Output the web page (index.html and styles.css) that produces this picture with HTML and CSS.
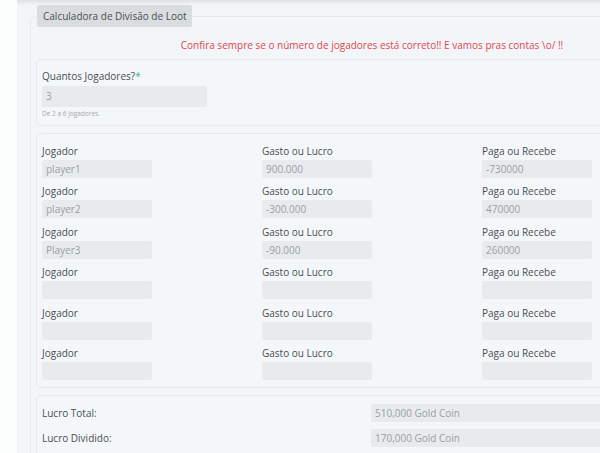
FILE: index.html
```html
<!DOCTYPE html>
<html lang="pt">
<head>
<meta charset="utf-8">
<title>Calculadora de Divisão de Loot</title>
<link rel="stylesheet" href="styles.css">
</head>
<body>
<div class="page">
  <div class="panel">
    <fieldset class="calc">
      <legend class="calc-legend">Calculadora de Divisão de Loot</legend>
      <p class="warning">Confira sempre se o número de jogadores está correto!! E vamos pras contas \o/ !!</p>

      <div class="box box-count">
        <label class="label">Quantos Jogadores?<span class="req">*</span></label>
        <div class="input input-count">3</div>
        <div class="help">De 2 a 6 jogadores.</div>
      </div>

      <div class="box box-players">
        <div class="row">
          <div class="cell"><label class="label">Jogador</label><div class="input">player1</div></div>
          <div class="cell"><label class="label">Gasto ou Lucro</label><div class="input">900.000</div></div>
          <div class="cell"><label class="label">Paga ou Recebe</label><div class="input">-730000</div></div>
        </div>
        <div class="row">
          <div class="cell"><label class="label">Jogador</label><div class="input">player2</div></div>
          <div class="cell"><label class="label">Gasto ou Lucro</label><div class="input">-300.000</div></div>
          <div class="cell"><label class="label">Paga ou Recebe</label><div class="input">470000</div></div>
        </div>
        <div class="row">
          <div class="cell"><label class="label">Jogador</label><div class="input">Player3</div></div>
          <div class="cell"><label class="label">Gasto ou Lucro</label><div class="input">-90.000</div></div>
          <div class="cell"><label class="label">Paga ou Recebe</label><div class="input">260000</div></div>
        </div>
        <div class="row">
          <div class="cell"><label class="label">Jogador</label><div class="input"></div></div>
          <div class="cell"><label class="label">Gasto ou Lucro</label><div class="input"></div></div>
          <div class="cell"><label class="label">Paga ou Recebe</label><div class="input"></div></div>
        </div>
        <div class="row">
          <div class="cell"><label class="label">Jogador</label><div class="input"></div></div>
          <div class="cell"><label class="label">Gasto ou Lucro</label><div class="input"></div></div>
          <div class="cell"><label class="label">Paga ou Recebe</label><div class="input"></div></div>
        </div>
        <div class="row">
          <div class="cell"><label class="label">Jogador</label><div class="input"></div></div>
          <div class="cell"><label class="label">Gasto ou Lucro</label><div class="input"></div></div>
          <div class="cell"><label class="label">Paga ou Recebe</label><div class="input"></div></div>
        </div>
      </div>

      <div class="box box-total">
        <div class="total-row">
          <span class="label">Lucro Total:</span>
          <div class="input input-wide">510,000 Gold Coin</div>
        </div>
        <div class="total-row">
          <span class="label">Lucro Dividido:</span>
          <div class="input input-wide">170,000 Gold Coin</div>
        </div>
      </div>
    </fieldset>
  </div>
</div>
</body>
</html>
```
FILE: styles.css
```css
html, body {
  margin: 0;
  padding: 0;
  overflow: hidden;
  background: #fcfdfd;
}
body {
  font-family: "Open Sans", "Noto Sans", sans-serif;
  color: #4a4e53;
}
.page {
  padding-left: 17px;
  width: 760px;
}
.panel {
  background: #f3f6f8;
  min-height: 453px;
  box-shadow: inset 0 5px 4px -3px rgba(0, 0, 0, 0.10);
  padding: 5px 0 0 13px;
}
.calc {
  margin: 0;
  width: 672px;
  padding: 0 5px 6px 5px;
  border: 1px solid #e5e9ec;
  border-radius: 6px;
  box-sizing: content-box;
}
.calc-legend {
  background: #d9dde0;
  color: #4a4e52;
  font-size: 10px;
  line-height: 22px;
  height: 22px;
  padding: 0 6px;
  margin-left: 1px;
  border-radius: 2px;
}
.warning {
  margin: 10px 0 6px 0;
  text-align: center;
  color: #e3444c;
  font-size: 10px;
  line-height: 16px;
}
.box {
  border: 1px solid #e6eaed;
  border-radius: 5px;
  background: #f4f7f9;
  padding: 0 5px 0 5px;
  margin-bottom: 7px;
}
.label {
  display: block;
  font-size: 10px;
  line-height: 14px;
  color: #4a4e53;
}
.req {
  color: #3cb878;
}
.input {
  background: #e8ebee;
  border-radius: 2px;
  color: #9a9ea3;
  font-size: 10px;
  line-height: 18px;
  height: 18px;
  padding: 0 4px;
  width: 102px;
  box-sizing: content-box;
}
.box-count {
  padding-top: 9px;
  padding-bottom: 6px;
}
.box-count .label {
  margin-bottom: 3px;
}
.input-count {
  width: 157px;
  height: 21px;
  line-height: 21px;
}
.help {
  font-size: 6.5px;
  color: #a4a8ac;
  margin-top: 2px;
  line-height: 10px;
}
.box-players {
  padding-top: 10px;
  padding-bottom: 7px;
}
.row {
  display: grid;
  grid-template-columns: 220px 220px 220px;
  margin-bottom: 6.4px;
}
.row:last-child {
  margin-bottom: 0;
}
.cell .label {
  margin-bottom: 2px;
}
.box-total {
  padding-top: 8px;
  padding-bottom: 6px;
}
.total-row {
  display: grid;
  grid-template-columns: 329px 1fr;
  align-items: center;
  margin-bottom: 7px;
}
.input-wide {
  width: auto;
}
```
